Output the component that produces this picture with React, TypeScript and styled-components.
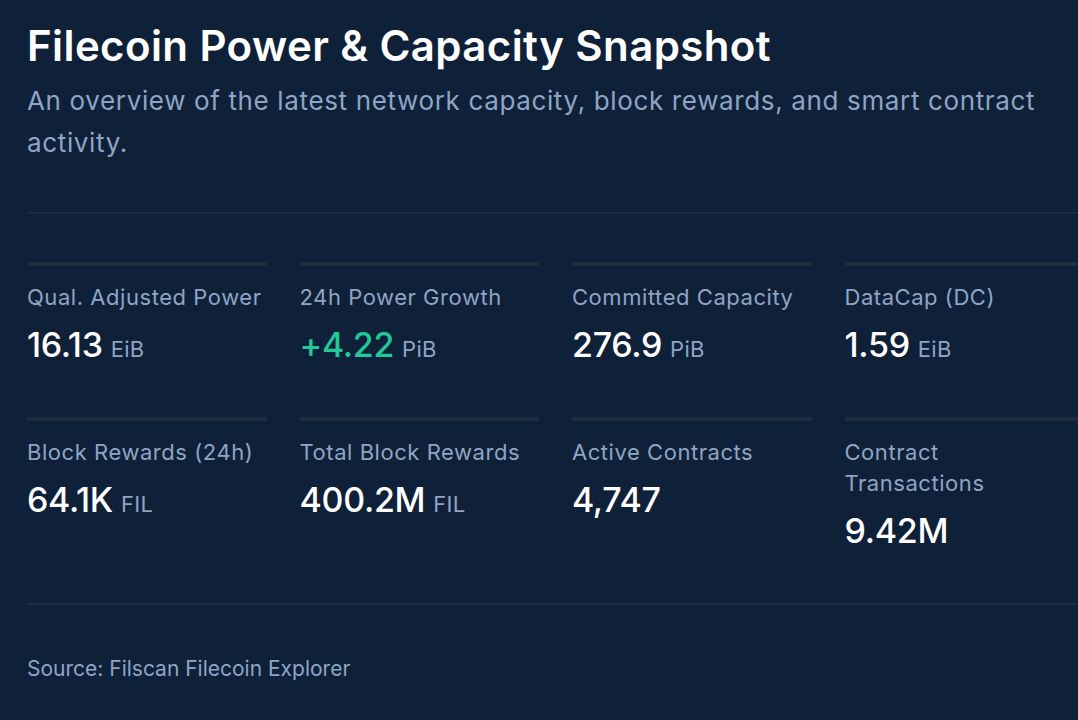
import React from "react";
import styled, { createGlobalStyle } from "styled-components";

const GlobalStyle = createGlobalStyle`
  html, body {
    margin: 0;
    padding: 0;
    background: #0f2039;
    overflow: hidden;
  }
  body {
    font-family: Inter, "Noto Sans", "Liberation Sans", sans-serif;
    color: #ffffff;
  }
`;

const Page = styled.main`
  width: 1057px;
  padding: 21px 0 0 27px;
`;

const Header = styled.header`
  padding-bottom: 48px;
  border-bottom: 2px solid #1a2c45;
`;

const Title = styled.h1`
  margin: 0;
  font-size: 42px;
  line-height: 50px;
  font-weight: 600;
  letter-spacing: 0.4px;
  color: #ffffff;
`;

const Subtitle = styled.p`
  margin: 9px 0 0;
  font-size: 26px;
  line-height: 42px;
  letter-spacing: 0.64px;
  color: #8fa5c3;
`;

const Grid = styled.section`
  display: grid;
  grid-template-columns: repeat(4, 1fr);
  column-gap: 33px;
  padding: 48px 0 4px;
  border-bottom: 2px solid #1a2c45;
`;

const Stat = styled.div`
  border-top: 4px solid #1d2c3f;
  padding: 16px 0 48px;
`;

const Label = styled.div`
  font-size: 22px;
  line-height: 31px;
  letter-spacing: 0.55px;
  color: #8fa5c3;
`;

const Value = styled.div<{ $accent?: boolean }>`
  margin-top: 12px;
  font-size: 34px;
  line-height: 40px;
  font-weight: 500;
  letter-spacing: -0.3px;
  color: ${(p) => (p.$accent ? "#1fc99a" : "#ffffff")};
`;

const Unit = styled.span`
  margin-left: 8px;
  font-size: 22px;
  font-weight: 400;
  letter-spacing: 0.3px;
  color: #8fa5c3;
`;

const Source = styled.footer`
  padding-top: 50px;
  font-size: 21px;
  line-height: 28px;
  color: #8fa5c3;
`;

interface StatItem {
  label: string;
  value: string;
  unit?: string;
  accent?: boolean;
}

const stats: StatItem[] = [
  { label: "Qual. Adjusted Power", value: "16.13", unit: "EiB" },
  { label: "24h Power Growth", value: "+4.22", unit: "PiB", accent: true },
  { label: "Committed Capacity", value: "276.9", unit: "PiB" },
  { label: "DataCap (DC)", value: "1.59", unit: "EiB" },
  { label: "Block Rewards (24h)", value: "64.1K", unit: "FIL" },
  { label: "Total Block Rewards", value: "400.2M", unit: "FIL" },
  { label: "Active Contracts", value: "4,747" },
  { label: "Contract Transactions", value: "9.42M" },
];

export default function App() {
  return (
    <>
      <GlobalStyle />
      <Page>
        <Header>
          <Title>Filecoin Power &amp; Capacity Snapshot</Title>
          <Subtitle>
            An overview of the latest network capacity, block rewards, and smart contract activity.
          </Subtitle>
        </Header>
        <Grid>
          {stats.map((s) => (
            <Stat key={s.label}>
              <Label>{s.label}</Label>
              <Value $accent={s.accent}>
                {s.value}
                {s.unit && <Unit>{s.unit}</Unit>}
              </Value>
            </Stat>
          ))}
        </Grid>
        <Source>Source: Filscan Filecoin Explorer</Source>
      </Page>
    </>
  );
}
